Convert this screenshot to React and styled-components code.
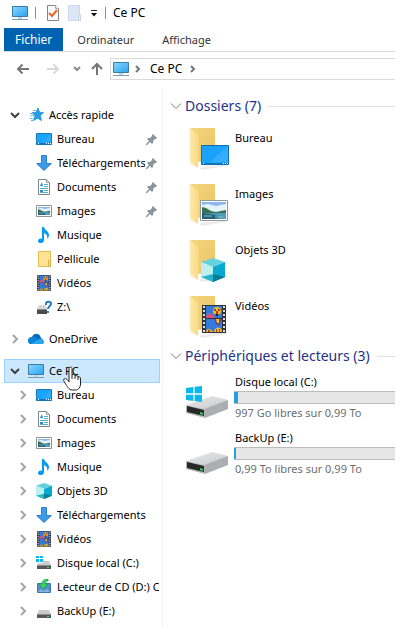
import React from "react";
import styled, { createGlobalStyle, css } from "styled-components";

const GlobalStyle = createGlobalStyle`
  * { box-sizing: border-box; }
  body { margin: 0; background: #fff; }
  button { font: inherit; color: inherit; background: none; border: 0; padding: 0; margin: 0; text-align: left; }
  ul { list-style: none; margin: 0; padding: 0; }
  svg { display: block; flex: none; }
`;

const Window = styled.div`
  display: flex;
  flex-direction: column;
  padding: 0 11px 0 4px;
  color: #000;
  font: 11px/16px "Noto Sans", "Open Sans", sans-serif;
`;

const TitleBar = styled.header`
  display: flex;
  align-items: center;
  height: 28px;
  padding: 0 0 2px 8px;
`;

const Divider = styled.span`
  width: 1px;
  height: 12px;
  margin: 0 11px 0 7px;
  background: #8c8c8c;
`;

const ToolButton = styled.button`
  display: flex;
  justify-content: center;
  width: ${(p) => p.$width}px;
`;

const Title = styled.h1`
  margin: 0 0 0 -4px;
  font-size: 12px;
  font-weight: 400;
`;

const Tabs = styled.nav`
  display: flex;
  border-bottom: 1px solid #dadbdc;
`;

const Tab = styled.button`
  && {
    height: 23px;
    padding: 0 ${(p) => (p.$active ? 11 : 14)}px;
    color: ${(p) => (p.$active ? "#fff" : "#333")};
    background: ${(p) => (p.$active ? "#0063b1" : "none")};
    font-size: ${(p) => (p.$active ? 12 : 11)}px;
  }
`;

const NavigationBar = styled.div`
  display: flex;
  align-items: center;
  margin-top: 6px;
  padding-left: 9px;
`;

const NavButton = styled.button`
  && {
    display: flex;
    justify-content: center;
    width: ${(p) => p.$width}px;
    margin-left: ${(p) => p.$gap || 0}px;
  }
`;

const AddressBar = styled.div`
  display: flex;
  flex: 1;
  align-items: center;
  height: 22px;
  padding-left: 2px;
  border: 1px solid #d9d9d9;
  border-right: 0;
`;

const Crumb = styled.button`
  && {
    padding: ${(p) => (p.$root ? "0 6px" : "0 8px 0 3px")};
    font-size: 12px;
  }
`;

const Body = styled.div`
  display: flex;
  margin-top: 8px;
`;

const Sidebar = styled.nav`
  flex: none;
  width: 159px;
  padding: 15px 2px 0 0;
  border-right: 1px solid #f3f3f3;
`;

const TreeGroup = styled.ul`
  && {
    margin-bottom: 8px;
    &:last-child { margin-bottom: 4px; }
  }
`;

const TreeItem = styled.li`
  position: relative;
`;

const TreeButton = styled.button`
  && {
    display: flex;
    align-items: center;
    width: 100%;
    height: 24px;
    padding-left: ${(p) => (p.$nested ? 11 : 3)}px;
    border: 1px solid transparent;
    ${(p) => p.$selected && css`
      background: #cce8ff;
      border-color: #99d1ff;
    `}
  }
`;

const ChevronSlot = styled.span`
  display: flex;
  flex: none;
  justify-content: center;
  width: 14px;
  margin-right: 6px;
`;

const TreeLabel = styled.span`
  flex: 1;
  min-width: 0;
  margin-left: 5px;
  overflow: hidden;
  white-space: nowrap;
`;

const PinSlot = styled.span`
  flex: none;
  width: 14px;
  padding: 0 2px 0 1px;
`;

const Pointer = styled.span`
  position: absolute;
  z-index: 1;
  top: 7px;
  left: 59px;
`;

const Content = styled.main`
  flex: 1;
  min-width: 0;
  padding: 8px 0 0 7px;
`;

const Section = styled.section`
  margin-bottom: 6px;
`;

const SectionHeader = styled.button`
  && {
    display: flex;
    align-items: center;
    width: 100%;
    height: 20px;
    color: #1e3287;
    font-size: 14px;
    line-height: 20px;
    white-space: nowrap;
  }
`;

const SectionTitle = styled.span`
  margin: 0 7px 0 3px;
`;

const Rule = styled.span`
  flex: 1;
  height: 1px;
  background: #e2e2e2;
`;

const Tile = styled.li`
  display: flex;
  height: 56px;
  padding-left: 16px;
`;

const TileIcon = styled.span`
  flex: none;
  width: 48px;
  padding-top: ${(p) => (p.$drive ? 16 : 12)}px;
`;

const TileText = styled.div`
  flex: 1;
  min-width: 0;
  padding-top: ${(p) => (p.$drive ? 8 : 14)}px;
  white-space: nowrap;
`;

const TileName = styled.div`
  padding-left: 1px;
`;

const TileDetail = styled.div`
  padding: 1px 0 0 1px;
  color: #6d6d6d;
`;

const Gauge = styled.div`
  height: 13px;
  margin-top: 1px;
  background: #e6e6e6;
  border: 1px solid #bcbcbc;
  border-width: 1px 0 1px 1px;
`;

const GaugeFill = styled.div`
  width: ${(p) => p.$width}px;
  height: 100%;
  margin-left: -1px;
  background: #26a0da;
`;

const Svg = ({ w = 16, h = 16, box, children }) => (
  <svg width={w} height={h} viewBox={box || `0 0 ${w} ${h}`} aria-hidden="true">{children}</svg>
);

const Chevron = ({ open }) => (
  <Svg w={12} h={12}>
    <path d={open ? "M2 4l4 4 4-4" : "M4 2l4 4-4 4"} fill="none" stroke={open ? "#404040" : "#a3a3a3"} strokeWidth="2" />
  </Svg>
);

const MonitorIcon = () => (
  <Svg>
    <defs>
      <linearGradient id="screen" x2="1" y2="1"><stop stopColor="#8bd8ff" /><stop offset="1" stopColor="#28a4ef" /></linearGradient>
    </defs>
    <path d="M.5 1.5h15v10H.5z" fill="url(#screen)" stroke="#3a7ca5" />
    <path d="M6 12h4v2H6z" fill="#bad5e5" />
    <path d="M0 14.5h16" stroke="#7e9aab" />
  </Svg>
);

const StarIcon = () => (
  <Svg>
    <path d="M10 1l1.6 4.3 4 .3-3.2 3 1.1 5-4-2.4-4 2.4 1.5-5-3-2.8 4.2-.5z" fill="#279ce5" stroke="#1687cf" strokeWidth=".7" />
    <path d="M5 3.500h3M2 6.500h3M3 8.500h3M2 11.500h3M3 13.500h2" stroke="#65b8ec" />
  </Svg>
);

const DesktopIcon = () => (
  <Svg>
    <path d="M.5 2.5h15v11H.5z" fill="#1ba4fa" stroke="#1678b9" />
    <path d="M15 3v8L5 13z" fill="#3cb1ff" opacity=".5" />
    <path d="M1 12.5h14" stroke="#0879c8" />
    <path d="M2 12.5h1m7 0h1m1 0h1m1 0h1" stroke="#fff" />
  </Svg>
);

const DownloadIcon = () => (
  <Svg><path d="M5.5.5h5v8h4.8L8 15.5.7 8.5h4.8z" fill="#3c9be9" stroke="#2f7fc9" /></Svg>
);

const DocumentIcon = () => (
  <Svg>
    <path d="M2.5.5h8l3 3v12h-11z" fill="#fff" stroke="#7f8589" />
    <path d="M10.5.5v3h3" fill="#e7eaec" stroke="#999" />
    <path d="M4 6.5h3M8 5.5h4M8 7.5h4M4 9.5h8M8 11.5h4M4 13.5h8" stroke="#5bacd9" />
    <path d="M4 7l2-4 1 4zM4 11h3v2H4z" fill="#268fd0" />
  </Svg>
);

const Landscape = () => (
  <>
    <path d="M0 0h24v17H0z" fill="#8db7ed" />
    <path d="M0 3l6-1 8 2 10-2v8H0z" fill="#e5f2f8" />
    <path d="M0 5l4 1 5 3 5 1 5-1 5-1v4H0z" fill="#367255" />
    <path d="M0 11h24v6H0z" fill="#4c9cba" />
    <path d="M0 11l9 1 9 3-4 2H0z" fill="#285f75" />
    <path d="M2 14h8m3 1h8" stroke="#8cc2d3" />
  </>
);

const ImageIcon = () => (
  <Svg>
    <path d="M.5 2.5h15v11H.5z" fill="#fff" stroke="#8d969d" />
    <svg x="2" y="4" width="12" height="8" viewBox="0 0 24 17" preserveAspectRatio="none"><Landscape /></svg>
  </Svg>
);

const MusicIcon = () => (
  <Svg>
    <path d="M6 0h2c.3 3 5 4 5 8 0 2-1 3-2 4 1-4-1-5-3-6v7c0 4-6 4-6 1 0-2 2-3 4-2z" fill="#079bf4" />
  </Svg>
);

const SmallFolderIcon = () => (
  <Svg>
    <path d="M2.5.5h12v15h-12z" fill="#ffe394" stroke="#e5bd54" />
    <path d="M12.5 15.5v-6h2v6z" fill="#ffe9a5" stroke="#dcb044" />
  </Svg>
);

const Film = () => (
  <>
    <path d="M0 0h24v28H0z" fill="#303237" />
    <path d="M2 1v26M22 1v26" stroke="#ddd" strokeWidth="2" strokeDasharray="2 2" />
    <path d="M4 1h16v12H4zM4 14h16v13H4z" fill="#3479dc" />
    <path d="M4 11l4-3 3 2 2 3H4z" fill="#d7517a" />
    <ellipse cx="15" cy="6" rx="4" ry="4" fill="#e6bf27" />
    <path d="M12 4h2v2h-2zM16 4h2v2h-2zM14 6h2v3h-2z" fill="#b53333" />
    <path d="M13 9l2 3 2-3" fill="#48231e" />
    <path d="M12 14h8l-3 6h-2z" fill="#7c3770" />
    <path d="M14 14h3v4h-2z" fill="#efcb2d" />
    <path d="M4 27c0-4 5-4 7 0zM12 27c0-6 8-6 8 0z" fill="#e6bf27" />
    <path d="M6 25h2v2H6zM14 24h1v3h-1zM17 24h1v3h-1z" fill="#bb393d" />
  </>
);

const VideoIcon = () => (
  <Svg>
    <svg x="1" width="14" height="16" viewBox="0 0 24 28" preserveAspectRatio="none"><Film /></svg>
  </Svg>
);

const SmallDrive = ({ y = 0 }) => (
  <g transform={`translate(0 ${y})`}>
    <path d="M3 6h10l2 4H1z" fill="#c9cccf" />
    <path d="M1 10h14v4H1z" fill="#55585a" />
    <path d="M1 10.5h14" stroke="#898c8f" />
    <path d="M11 12h2v1h-2z" fill="#35df56" />
  </g>
);

const NetworkDriveIcon = () => (
  <Svg>
    <path d="M3 6h7v4H1z" fill="#d5d7d9" />
    <path d="M1 10h10v5H1z" fill="#494d50" />
    <path d="M1 10.5h10" stroke="#8a8d90" />
    <path d="M10 6V5c0-3 5-3 5 0 0 2-3 2-3 5" fill="none" stroke="#247eb8" strokeWidth="2" />
    <path d="M11 12h2v2h-2z" fill="#247eb8" />
  </Svg>
);

const CloudIcon = () => (
  <Svg>
    <path d="M1 12C-1 9 1 6 4 6c2-5 8-4 9 1l2 2-7 4H4c-1 0-2 0-3-1z" fill="#0869bd" />
    <path d="M4 6c3-1 4 1 7 3l-8 4C0 13-1 9 1 7z" fill="#1282d6" />
    <path d="M3 13l8-5c3-1 5 1 5 3s-1 2-3 2z" fill="#29a5ec" />
  </Svg>
);

const Cube = () => (
  <>
    <path d="M12 0l12 4-12 5L0 4z" fill="#64d2df" />
    <path d="M0 4l12 5v15L0 19z" fill="#bceff0" />
    <path d="M12 9l12-5v15l-12 5z" fill="#08a8d1" />
    <path d="M12 16l12 3-12 5z" fill="#087f98" />
    <path d="M0 19l12-3v8z" fill="#2ab4c6" />
  </>
);

const CubeIcon = () => <Svg box="0 0 24 24"><Cube /></Svg>;

const Flag = () => <path d="M0 1.2L4.6.6v4H0zM5.4.5L10 0v4.6H5.4zM0 5.4h4.6v4L0 8.8zM5.4 5.4H10V10l-4.6-.6z" fill="#08b8ef" />;

const SystemDriveIcon = () => (
  <Svg>
    <SmallDrive />
    <path d="M0 0h7v8H0z" fill="#fff" />
    <path d="M0 1h3v2H0zM4 1h3v2H4zM0 4h3v3H0zM4 4h3v3H4z" fill="#08b8ef" />
  </Svg>
);

const DriveIcon = () => <Svg><SmallDrive y={1} /></Svg>;

const DiscIcon = () => (
  <Svg>
    <path d="M1.5 4.5h13v9h-13z" fill="#548fca" stroke="#3779ae" />
    <path d="M2 13l3-3 3 2 3-2 3 3z" fill="#83b3df" />
    <path d="M12 0c-4 0-6 2-6 5H3l4 5 5-5H9c0-2 1-3 3-3z" fill="#35d665" stroke="#17984b" strokeWidth=".7" />
  </Svg>
);

const PinIcon = () => (
  <Svg w={11} h={12}>
    <path d="M7 1l4 4-1 1H9L7 8v2l-1 1-2-2-3 3H0v-1l3-3-2-2 1-1h2l2-2V2z" fill="#88959f" />
  </Svg>
);

const BackArrow = ({ faded }) => (
  <Svg w={14} h={12}>
    <path d={faded ? "M1 6h11M7.500 1.500L12 6l-4.500 4.500" : "M13 6H2M6.500 1.500L2 6l4.500 4.500"} fill="none" stroke={faded ? "#d8d8d8" : "#757575"} strokeWidth="2" />
  </Svg>
);

const UpArrow = () => (
  <Svg w={12} h={14}><path d="M6 13V2M1 7l5-5 5 5" fill="none" stroke="#757575" strokeWidth="2" /></Svg>
);

const HistoryIcon = () => (
  <Svg w={8} h={6}><path d="M1 1l3 3 3-3" fill="none" stroke="#8a8a8a" strokeWidth="2" /></Svg>
);

const CrumbArrow = () => (
  <Svg w={6} h={8}><path d="M1 1l3 3-3 3" fill="none" stroke="#777" strokeWidth="2" /></Svg>
);

const PropertiesIcon = () => (
  <Svg w={12} h={16}>
    <path d="M.5.5h8l3 3v12H.5z" fill="#f9fafb" stroke="#858585" />
    <path d="M8.500.5v3h3" fill="#fff" stroke="#aaa" />
    <path d="M2 8l3 3 5-6" fill="none" stroke="#e4662c" strokeWidth="2" />
  </Svg>
);

const NewFolderIcon = () => (
  <Svg w={14} h={16}>
    <path d="M.5.5h11v9h1v6H.5z" fill="#dce6f5" stroke="#cfdbed" />
    <path d="M10.500 15.500v-5h2v5z" fill="#e7eef9" stroke="#c5d3e9" />
  </Svg>
);

const MenuIcon = () => (
  <Svg w={8} h={7}><path d="M1 .5h6" stroke="#222" /><path d="M1 3h6L4 6.500z" fill="#111" /></Svg>
);

const SectionChevron = () => (
  <Svg w={12} h={8}><path d="M1 1.500l5 5 5-5" fill="none" stroke="#777" /></Svg>
);

const overlays = {
  desktop: (
    <svg x="11" y="17" width="28" height="20" viewBox="0 0 28 20">
      <path d="M.5.5h27v19H.5z" fill="#1ba2fb" stroke="#126da9" />
      <path d="M27 1v16L8 18z" fill="#4bb7ff" opacity=".5" />
      <path d="M1 18.500h26" stroke="#087bcb" />
      <path d="M2 18.500h1m19 0h1m1 0h1m1 0h1" stroke="#fff" />
    </svg>
  ),
  images: (
    <svg x="10" y="16" width="28" height="21" viewBox="0 0 28 21">
      <path d="M.5.5h27v20H.5z" fill="#fff" stroke="#92999e" />
      <svg x="2" y="2" width="24" height="17"><Landscape /></svg>
    </svg>
  ),
  objects: <svg x="11" y="18" width="24" height="24"><Cube /></svg>,
  videos: <svg x="12" y="9" width="24" height="28"><Film /></svg>,
};

const FolderIcon = ({ kind }) => (
  <Svg w={44} h={44} box="-4 0 44 44">
    <defs>
      <linearGradient id="folderBack" x2="1" y2="1"><stop stopColor="#f4d77d" /><stop offset="1" stopColor="#e9c263" /></linearGradient>
      <linearGradient id="folderFront" x2="1"><stop stopColor="#ffe9aa" /><stop offset="1" stopColor="#f8d980" /></linearGradient>
    </defs>
    <path d="M8 39l30-3-2 2-24 4z" fill="#ececec" />
    <path d="M0 0h25v36l-17 3z" fill="url(#folderBack)" />
    <path d="M8 34l17-3v5L8 40z" fill="#fff" />
    <path d="M0 0l9 7v26l-1 1v6l-8-5z" fill="url(#folderFront)" />
    {overlays[kind]}
  </Svg>
);

const LargeDriveIcon = ({ system }) => (
  <Svg w={44} h={40} box="0 1 44 40">
    <defs>
      <linearGradient id="driveTop" x2="1" y2="1"><stop stopColor="#e9e9eb" /><stop offset="1" stopColor="#c9cacd" /></linearGradient>
    </defs>
    <path d="M0 24L26 15l16 4-23 9z" fill="url(#driveTop)" />
    <path d="M18 28l24-9v9l-23 9z" fill="#acaeb1" />
    <path d="M0 24l19 4v9L0 32z" fill="#b5b7b9" />
    <path d="M1 25l17 4v6L1 31z" fill="#262829" />
    <path d="M14 31l3 1v2l-3-1z" fill="#38d85d" />
    {system && <svg x="0" y="5" width="16" height="16" viewBox="0 0 10 10"><Flag /></svg>}
  </Svg>
);

const HandIcon = () => (
  <Svg w={18} h={25}>
    <path d="M6 14V2.500c0-2 3-2 3 0V9c1-1 3-1 3 1 1-1 3 0 3 1 1-1 2.500 0 2.500 2v5c0 3-2 6-5 6H9c-3 0-5-4-7-7-1-2-2-3-1-4 2-1 4 1 5 3z" fill="#fff" stroke="#222" strokeLinejoin="round" />
    <path d="M9 9v4m3-3v3m3-2v3" stroke="#222" />
  </Svg>
);

const TREE = [
  [
    { label: "Accès rapide", Icon: StarIcon, chevron: "open" },
    { label: "Bureau", Icon: DesktopIcon, nested: true, pinned: true },
    { label: "Téléchargements", Icon: DownloadIcon, nested: true, pinned: true },
    { label: "Documents", Icon: DocumentIcon, nested: true, pinned: true },
    { label: "Images", Icon: ImageIcon, nested: true, pinned: true },
    { label: "Musique", Icon: MusicIcon, nested: true },
    { label: "Pellicule", Icon: SmallFolderIcon, nested: true },
    { label: "Vidéos", Icon: VideoIcon, nested: true },
    { label: "Z:\\", Icon: NetworkDriveIcon, nested: true },
  ],
  [{ label: "OneDrive", Icon: CloudIcon, chevron: "closed" }],
  [
    { label: "Ce PC", Icon: MonitorIcon, chevron: "open", selected: true },
    { label: "Bureau", Icon: DesktopIcon, nested: true, chevron: "closed" },
    { label: "Documents", Icon: DocumentIcon, nested: true, chevron: "closed" },
    { label: "Images", Icon: ImageIcon, nested: true, chevron: "closed" },
    { label: "Musique", Icon: MusicIcon, nested: true, chevron: "closed" },
    { label: "Objets 3D", Icon: CubeIcon, nested: true, chevron: "closed" },
    { label: "Téléchargements", Icon: DownloadIcon, nested: true, chevron: "closed" },
    { label: "Vidéos", Icon: VideoIcon, nested: true, chevron: "closed" },
    { label: "Disque local (C:)", Icon: SystemDriveIcon, nested: true, chevron: "closed" },
    { label: "Lecteur de CD (D:) C", Icon: DiscIcon, nested: true, chevron: "closed" },
    { label: "BackUp (E:)", Icon: DriveIcon, nested: true, chevron: "closed" },
  ],
];

const FOLDERS = [
  { name: "Bureau", kind: "desktop" },
  { name: "Images", kind: "images" },
  { name: "Objets 3D", kind: "objects" },
  { name: "Vidéos", kind: "videos" },
];

const DRIVES = [
  { name: "Disque local (C:)", detail: "997 Go libres sur 0,99 To", used: 4, system: true },
  { name: "BackUp (E:)", detail: "0,99 To libres sur 0,99 To", used: 2 },
];

const TreeRow = ({ label, Icon, chevron, nested, pinned, selected }) => (
  <TreeItem>
    <TreeButton type="button" $nested={nested} $selected={selected} aria-current={selected ? "page" : undefined}>
      <ChevronSlot>{chevron && <Chevron open={chevron === "open"} />}</ChevronSlot>
      <Icon />
      <TreeLabel>{label}</TreeLabel>
      {pinned && <PinSlot><PinIcon /></PinSlot>}
    </TreeButton>
    {selected && <Pointer><HandIcon /></Pointer>}
  </TreeItem>
);

export default function App() {
  return (
    <>
      <GlobalStyle />
      <Window>
        <TitleBar>
          <MonitorIcon />
          <Divider />
          <ToolButton type="button" $width={12} aria-label="Propriétés"><PropertiesIcon /></ToolButton>
          <ToolButton type="button" $width={31} aria-label="Nouveau dossier"><NewFolderIcon /></ToolButton>
          <ToolButton type="button" $width={8} aria-label="Personnaliser"><MenuIcon /></ToolButton>
          <Divider />
          <Title>Ce PC</Title>
        </TitleBar>
        <Tabs>
          <Tab type="button" $active>Fichier</Tab>
          <Tab type="button">Ordinateur</Tab>
          <Tab type="button">Affichage</Tab>
        </Tabs>
        <NavigationBar>
          <NavButton type="button" $width={20} aria-label="Précédent"><BackArrow /></NavButton>
          <NavButton type="button" $width={40} aria-label="Suivant"><BackArrow faded /></NavButton>
          <NavButton type="button" $width={8} aria-label="Emplacements récents"><HistoryIcon /></NavButton>
          <NavButton type="button" $width={26} $gap={3} aria-label="Dossier parent"><UpArrow /></NavButton>
          <AddressBar>
            <MonitorIcon />
            <Crumb type="button" $root aria-label="Racine"><CrumbArrow /></Crumb>
            <Crumb type="button">Ce PC</Crumb>
            <CrumbArrow />
          </AddressBar>
        </NavigationBar>
        <Body>
          <Sidebar aria-label="Volet de navigation">
            {TREE.map((group) => (
              <TreeGroup key={group[0].label}>
                {group.map((item) => <TreeRow key={item.label} {...item} />)}
              </TreeGroup>
            ))}
          </Sidebar>
          <Content>
            <Section>
              <SectionHeader type="button"><SectionChevron /><SectionTitle>Dossiers (7)</SectionTitle><Rule /></SectionHeader>
              <ul>
                {FOLDERS.map((f) => (
                  <Tile key={f.name}>
                    <TileIcon><FolderIcon kind={f.kind} /></TileIcon>
                    <TileText><TileName>{f.name}</TileName></TileText>
                  </Tile>
                ))}
              </ul>
            </Section>
            <Section>
              <SectionHeader type="button"><SectionChevron /><SectionTitle>Périphériques et lecteurs (3)</SectionTitle><Rule /></SectionHeader>
              <ul>
                {DRIVES.map((d) => (
                  <Tile key={d.name}>
                    <TileIcon $drive><LargeDriveIcon system={d.system} /></TileIcon>
                    <TileText $drive>
                      <TileName>{d.name}</TileName>
                      <Gauge><GaugeFill $width={d.used} /></Gauge>
                      <TileDetail>{d.detail}</TileDetail>
                    </TileText>
                  </Tile>
                ))}
              </ul>
            </Section>
          </Content>
        </Body>
      </Window>
    </>
  );
}
